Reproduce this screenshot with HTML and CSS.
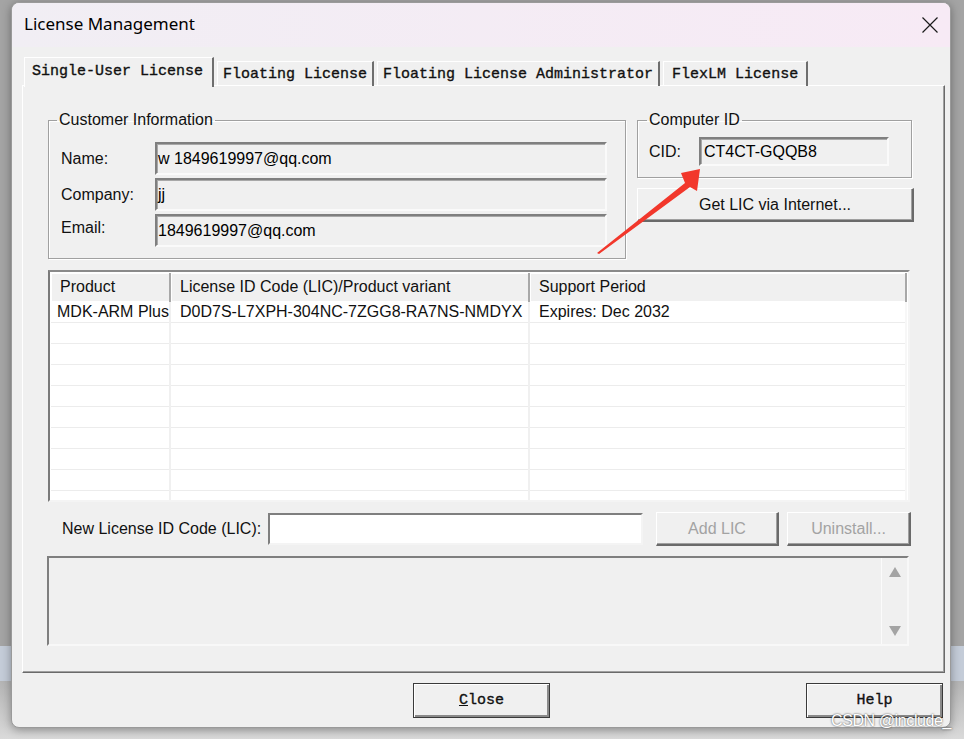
FILE: index.html
```html
<!DOCTYPE html>
<html lang="en">
<head>
    <meta charset="UTF-8">
    <meta name="viewport" content="width=device-width, initial-scale=1.0">
    <title>License Management</title>
    <link rel="stylesheet" href="styles.css">
</head>
<body>
    <div class="window">
        <div class="titlebar">
            <span class="title">License Management</span>
            <svg class="close-x" width="18" height="18" viewBox="0 0 18 18">
                <path d="M1.5 1.5L16.5 16.5M16.5 1.5L1.5 16.5" stroke="#1a1a1a" stroke-width="1.2" fill="none"/>
            </svg>
        </div>

        <div class="client">
            <div class="tabs">
                <div class="tab active">Single-User License</div>
                <div class="tab">Floating License</div>
                <div class="tab">Floating License Administrator</div>
                <div class="tab last">FlexLM License</div>
            </div>

            <div class="panel">
                <div class="top">
                    <fieldset class="group customer">
                        <legend>Customer Information</legend>
                        <div class="field-row">
                            <label>Name:</label>
                            <div class="field">w 1849619997@qq.com</div>
                        </div>
                        <div class="field-row">
                            <label>Company:</label>
                            <div class="field">jj</div>
                        </div>
                        <div class="field-row">
                            <label class="up">Email:</label>
                            <div class="field">1849619997@qq.com</div>
                        </div>
                    </fieldset>

                    <div class="side">
                        <fieldset class="group computer">
                            <legend>Computer ID</legend>
                            <div class="field-row">
                                <label>CID:</label>
                                <div class="field">CT4CT-GQQB8</div>
                            </div>
                        </fieldset>
                        <button class="btn wide">Get LIC via Internet...</button>
                    </div>
                </div>

                <div class="list">
                    <table>
                        <colgroup>
                            <col class="c1">
                            <col class="c2">
                            <col>
                        </colgroup>
                        <thead>
                            <tr>
                                <th>Product</th>
                                <th>License ID Code (LIC)/Product variant</th>
                                <th>Support Period</th>
                            </tr>
                        </thead>
                        <tbody>
                            <tr>
                                <td>MDK-ARM Plus</td>
                                <td>D0D7S-L7XPH-304NC-7ZGG8-RA7NS-NMDYX</td>
                                <td>Expires: Dec 2032</td>
                            </tr>
                            <tr><td></td><td></td><td></td></tr>
                            <tr><td></td><td></td><td></td></tr>
                            <tr><td></td><td></td><td></td></tr>
                            <tr><td></td><td></td><td></td></tr>
                            <tr><td></td><td></td><td></td></tr>
                            <tr><td></td><td></td><td></td></tr>
                            <tr><td></td><td></td><td></td></tr>
                            <tr><td></td><td></td><td></td></tr>
                            <tr><td></td><td></td><td></td></tr>
                        </tbody>
                    </table>
                </div>

                <div class="lic-row">
                    <label for="lic">New License ID Code (LIC):</label>
                    <input type="text" id="lic" class="lic-input">
                    <button class="btn small" disabled>Add LIC</button>
                    <button class="btn small" disabled>Uninstall...</button>
                </div>

                <div class="log">
                    <div class="scroll">
                        <span class="arrow-up"></span>
                        <span class="arrow-down"></span>
                    </div>
                </div>
            </div>

            <div class="footer">
                <button class="btn sys close-btn"><u>C</u>lose</button>
                <button class="btn sys help-btn">Help</button>
            </div>
        </div>
    </div>

    <!-- callout pointing at the CID -->
    <svg class="callout" width="964" height="739" viewBox="0 0 964 739">
        <polygon points="597,253 685,183 681,173 700,169 697,191 690,187 599,254" fill="#f2372b"/>
    </svg>

    <span class="mark">CSDN @include_</span>
</body>
</html>
```

FILE: styles.css
```css
body {
    margin: 0;
    width: 964px;
    height: 739px;
    overflow: hidden;
    position: relative;
    font-family: "Liberation Sans", Arial, sans-serif;
    font-size: 16px;
    color: #000;
    background: linear-gradient(to bottom, #a4a4a4 0, #a4a4a4 646px, #c4ccd8 646px, #c4ccd8 681px, #b4b4b4 681px, #dadada 739px);
}

.window {
    margin: 2px 0 0 11px;
    width: 940px;
    height: 726px;
    box-sizing: border-box;
    background: #f0f0f0;
    border: 1px solid #9a9a9a;
    border-radius: 8px;
    box-shadow: 0 2px 10px rgba(0, 0, 0, 0.35);
    overflow: hidden;
}

.titlebar {
    height: 44px;
    box-sizing: border-box;
    display: flex;
    align-items: center;
    justify-content: space-between;
    padding: 0 12px 4px 12px;
    background: linear-gradient(90deg, #f1eef4, #f7eaf5);
}
.title {
    font-family: "Noto Sans", "Open Sans", sans-serif;
    font-size: 17px;
    color: #000;
}
.close-x {
    margin-right: -1px;
    margin-top: 4px;
}

.client {
    padding: 10px 5px 0 10px;
}

/* tab strip */
.tabs {
    display: flex;
    align-items: flex-end;
    gap: 2px;
    padding-left: 2px;
    height: 29px;
    position: relative;
    z-index: 1;
    margin-bottom: -1px;
}
.tab {
    font-family: "Liberation Mono", "Courier New", monospace;
    font-size: 15px;
    -webkit-text-stroke: 0.35px #111;
    height: 25px;
    line-height: 25px;
    padding: 0 5px 0 5px;
    border-top: 1px solid #fff;
    border-left: 1px solid #fff;
    border-right: 2px solid #6e6e6e;
    box-sizing: border-box;
    white-space: nowrap;
    color: #111;
}
.tab + .tab {
    margin-left: 1px;
}
.tab.last {
    padding: 0 8px 0 8px;
}
.tab.active {
    height: 30px;
    line-height: 28px;
    padding: 0 9px 0 7px;
    background: #f0f0f0;
    margin-bottom: -1px;
}

.panel {
    width: 923px;
    height: 588px;
    box-sizing: border-box;
    border: 1px solid;
    border-color: #fff #6a6a6a #6a6a6a #fff;
    box-shadow: inset -1px -1px 0 #a0a0a0;
    padding: 24px 0 0 25px;
}

.top {
    display: flex;
    gap: 11px;
}

/* group boxes */
.group {
    margin: 0;
    box-sizing: border-box;
    border: 1px solid #a0a0a0;
    box-shadow: 1px 1px 0 #fff, inset 1px 1px 0 #fff;
}
.group legend {
    padding: 0 2px;
    margin-left: -4px;
    line-height: 20px;
    color: #111;
}
.customer {
    width: 578px;
    padding: 12px 18px 11px 12px;
}
.computer {
    width: 275px;
    padding: 7px 22px 11px 11px;
}
.computer legend {
    margin-left: -2px;
}
.field-row {
    display: flex;
    align-items: center;
    height: 33px;
    margin-bottom: 3px;
}
.field-row:last-child {
    margin-bottom: 0;
}
.field-row label {
    width: 94px;
    flex-shrink: 0;
    color: #111;
}
.field-row label.up {
    margin-top: -6px;
}
.field {
    flex: 1;
    height: 33px;
    line-height: 29px;
    box-sizing: border-box;
    padding-left: 1px;
    border: 2px solid;
    border-color: #7f7f7f #fafafa #fafafa #7f7f7f;
    box-shadow: inset 1px 1px 0 #a8a8a8;
    background: #f0f0f0;
    white-space: nowrap;
}
.computer .field-row {
    height: 29px;
}
.computer .field-row label {
    width: 50px;
}
.computer .field {
    height: 29px;
    line-height: 25px;
    padding-left: 3px;
}

/* buttons */
.btn {
    font-family: "Liberation Sans", Arial, sans-serif;
    font-size: 16px;
    color: #111;
    background: #f0f0f0;
    box-sizing: border-box;
    border-style: solid;
    border-width: 1px 2px 2px 1px;
    border-color: #fff #6a6a6a #6a6a6a #fff;
    box-shadow: inset -1px -1px 0 #a0a0a0;
    padding: 0;
}
.btn:disabled {
    color: #a3a3a3;
}
.wide {
    display: block;
    width: 277px;
    height: 34px;
    margin-top: 10px;
}

/* license list */
.list {
    width: 862px;
    height: 232px;
    margin-top: 11px;
    box-sizing: border-box;
    border: 2px solid;
    border-color: #8a8a8a #f4f4f4 #f4f4f4 #7a7a7a;
    background: #fff;
    overflow: hidden;
    padding: 1px 1px 0 1px;
}
.list table {
    width: 100%;
    table-layout: fixed;
    border-collapse: collapse;
}
.list col.c1 {
    width: 119px;
}
.list col.c2 {
    width: 359px;
}
.list th {
    height: 28px;
    text-align: left;
    font-weight: normal;
    padding: 0 0 0 9px;
    background: #f0f0f0;
    border-right: 2px solid #a8a8a8;
    border-bottom: 1px solid #fff;
    box-shadow: inset 1px 1px 0 #fff;
    color: #111;
    white-space: nowrap;
}
.list td {
    height: 20px;
    padding: 0 0 0 9px;
    border-right: 2px solid #f0f0f0;
    border-bottom: 1px solid #ececec;
    white-space: nowrap;
    overflow: hidden;
    color: #111;
}
.list td:first-child {
    padding-left: 6px;
}
.list td:last-child {
    border-right-color: #f7f7f7;
}

.lic-row {
    display: flex;
    align-items: center;
    height: 34px;
    margin-top: 10px;
}
.lic-row label {
    width: 220px;
    box-sizing: border-box;
    padding-left: 14px;
    color: #111;
}
.lic-input {
    width: 375px;
    height: 32px;
    box-sizing: border-box;
    margin: 0 13px 0 0;
    border: 2px solid;
    border-color: #7f7f7f #f4f4f4 #f4f4f4 #7f7f7f;
    background: #fff;
    padding: 0 4px;
}
.small {
    width: 123px;
    height: 34px;
}
.small + .small {
    margin-left: 8px;
    width: 124px;
}

/* message box with disabled scroller */
.log {
    width: 862px;
    height: 90px;
    margin: 10px 0 0 -1px;
    box-sizing: border-box;
    border: 2px solid;
    border-color: #7f7f7f #f8f8f8 #f8f8f8 #7f7f7f;
    display: flex;
    justify-content: flex-end;
}
.scroll {
    width: 25px;
    border-left: 1px solid #fbfbfb;
    display: flex;
    flex-direction: column;
    align-items: center;
    justify-content: space-between;
    padding: 9px 0 8px;
}
.arrow-up,
.arrow-down {
    width: 0;
    height: 0;
    border-left: 6px solid transparent;
    border-right: 6px solid transparent;
}
.arrow-up {
    border-bottom: 10px solid #a4a4a4;
}
.arrow-down {
    border-top: 10px solid #a4a4a4;
}

.footer {
    display: flex;
    padding-top: 10px;
}
.sys {
    width: 137px;
    height: 35px;
    font-family: "Liberation Mono", "Courier New", monospace;
    font-size: 15px;
    -webkit-text-stroke: 0.35px #111;
    border: 1px solid #3a3a3a;
    box-shadow: inset 1px 1px 0 #fff, inset -2px -2px 0 #8a8a8a;
}
.close-btn {
    margin-left: 391px;
}
.help-btn {
    margin-left: auto;
    margin-right: 2px;
}

.callout {
    position: absolute;
    left: 0;
    top: 0;
    pointer-events: none;
}

.mark {
    position: absolute;
    left: 831px;
    top: 712px;
    font-size: 16px;
    color: #fff;
    text-shadow: 0 0 2px rgba(0, 0, 0, 0.8);
    letter-spacing: -0.4px;
}
```
